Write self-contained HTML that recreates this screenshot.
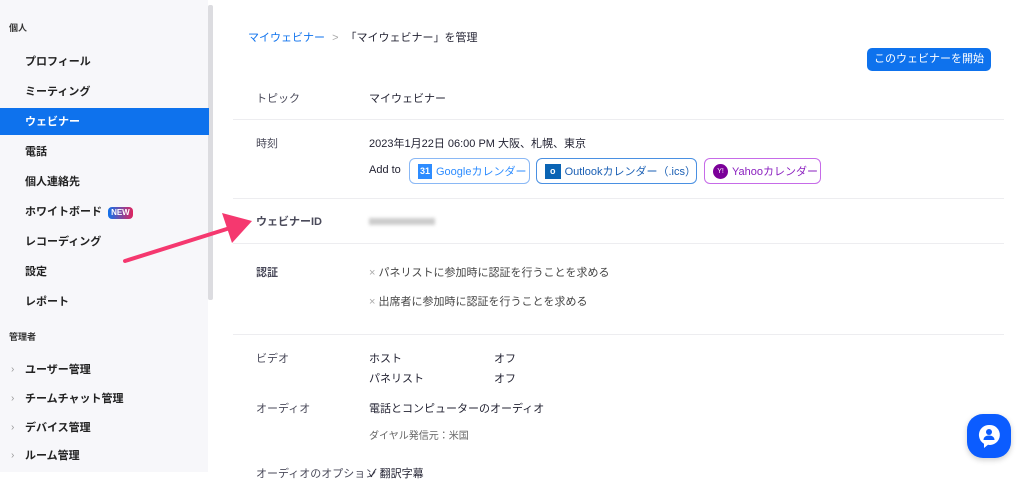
<!DOCTYPE html>
<html><head><meta charset="utf-8"><style>
*{margin:0;padding:0;box-sizing:border-box}
body{width:1024px;height:472px;overflow:hidden;background:#fff;font-family:"Liberation Sans","Noto Sans CJK JP",sans-serif;color:#232333;font-size:11px;position:relative}
.sb{position:absolute;left:0;top:0;width:208px;height:472px;background:#f7f7fa}
.scroll{position:absolute;left:208px;top:5px;width:5px;height:295px;background:#dcdce0;border-radius:2px}
.t{position:absolute;white-space:nowrap;line-height:14px}
.sh{font-size:9px;font-weight:bold;color:#333;left:9px}
.si{left:25px;font-weight:bold;font-size:11px;color:#222}
.act{position:absolute;left:0;top:108px;width:209px;height:27px;background:#0e72ed}
.chev{left:11px;color:#999;font-size:10px}
.line{position:absolute;left:233px;width:771px;height:1px;background:#ededf0}
.lab{left:256px;color:#4a4a5a}
.val{left:369px;color:#232333}
.btn{position:absolute;height:26px;border:1px solid;border-radius:6px;display:flex;align-items:center;padding-left:8px;font-size:11px;white-space:nowrap}
</style></head><body>
<div class="sb"></div>
<div class="scroll"></div>
<div class="act"></div>
<div class="t sh" style="top:21px">個人</div>
<div class="t si" style="top:55px">プロフィール</div>
<div class="t si" style="top:85px">ミーティング</div>
<div class="t si" style="top:115px;color:#fff">ウェビナー</div>
<div class="t si" style="top:145px">電話</div>
<div class="t si" style="top:175px">個人連絡先</div>
<div class="t si" style="top:205px">ホワイトボード <span style="display:inline-block;background:linear-gradient(90deg,#0e72ed,#e0245e);color:#fff;font-size:8px;border-radius:4px;padding:0 3px;line-height:12px;margin-left:3px">NEW</span></div>
<div class="t si" style="top:235px">レコーディング</div>
<div class="t si" style="top:265px">設定</div>
<div class="t si" style="top:295px">レポート</div>
<div class="t sh" style="top:330px">管理者</div>
<div class="t chev" style="top:363px">›</div><div class="t si" style="top:363px">ユーザー管理</div>
<div class="t chev" style="top:392px">›</div><div class="t si" style="top:392px">チームチャット管理</div>
<div class="t chev" style="top:421px">›</div><div class="t si" style="top:421px">デバイス管理</div>
<div class="t chev" style="top:449px">›</div><div class="t si" style="top:449px">ルーム管理</div>

<div class="t" style="left:248px;top:31px"><span style="color:#0e72ed">マイウェビナー</span> <span style="color:#aaa;margin:0 4px">&gt;</span> 「マイウェビナー」を管理</div>
<div style="position:absolute;left:867px;top:48px;width:124px;height:23px;background:#0e72ed;border-radius:5px;color:#fff;font-size:11px;text-align:center;line-height:23px">このウェビナーを開始</div>

<div class="t lab" style="top:92px">トピック</div><div class="t val" style="top:92px">マイウェビナー</div>
<div class="line" style="top:119px"></div>
<div class="t lab" style="top:137px">時刻</div><div class="t val" style="top:137px">2023年1月22日 06:00 PM 大阪、札幌、東京</div>
<div class="t val" style="top:163px">Add to</div>
<div class="btn" style="left:409px;top:158px;width:121px;border-color:#8ab8f5;color:#2d8cff"><span style="display:inline-block;width:14px;height:15px;background:#2d8cff;color:#fff;font-size:9px;font-weight:bold;text-align:center;line-height:15px;margin-right:4px">31</span>Googleカレンダー</div>
<div class="btn" style="left:536px;top:158px;width:161px;border-color:#4a90e2;color:#1a5fb4"><span style="display:inline-block;width:16px;height:15px;background:#0a64b4;color:#fff;font-size:9px;font-weight:bold;text-align:center;line-height:15px;margin-right:4px">o</span>Outlookカレンダー（.ics）</div>
<div class="btn" style="left:704px;top:158px;width:117px;border-color:#c66be8;color:#8a1fbf"><span style="display:inline-block;width:15px;height:15px;border-radius:50%;background:#7b0099;color:#fff;font-size:7px;text-align:center;line-height:15px;margin-right:4px">Y!</span>Yahooカレンダー</div>
<div class="line" style="top:198px"></div>
<div class="t lab" style="top:215px;font-weight:bold">ウェビナーID</div>
<div style="position:absolute;left:369px;top:218px;width:66px;height:7px;background:#ccc;filter:blur(1.5px)"></div>
<div class="line" style="top:243px"></div>
<div class="t lab" style="top:266px;font-weight:bold">認証</div>
<div class="t val" style="top:266px;color:#444"><span style="color:#aaa">×</span> パネリストに参加時に認証を行うことを求める</div>
<div class="t val" style="top:295px;color:#444"><span style="color:#aaa">×</span> 出席者に参加時に認証を行うことを求める</div>
<div class="line" style="top:334px"></div>
<div class="t lab" style="top:352px">ビデオ</div><div class="t val" style="top:352px">ホスト</div><div class="t" style="left:494px;top:352px">オフ</div>
<div class="t val" style="top:372px">パネリスト</div><div class="t" style="left:494px;top:372px">オフ</div>
<div class="t lab" style="top:402px">オーディオ</div><div class="t val" style="top:402px">電話とコンピューターのオーディオ</div>
<div class="t val" style="top:430px;color:#666;font-size:10px">ダイヤル発信元：米国</div>
<div class="t lab" style="top:467px">オーディオのオプション</div><div class="t val" style="top:467px">✓ 翻訳字幕</div>

<svg style="position:absolute;left:0;top:0" width="1024" height="472">
<line x1="125" y1="261" x2="230" y2="228" stroke="#f5386f" stroke-width="4" stroke-linecap="round"/>
<polygon points="252,221 222,213 232,243" fill="#f5386f"/>
</svg>
<div style="position:absolute;left:967px;top:414px;width:44px;height:44px;background:#0b5cff;border-radius:16px;box-shadow:0 2px 6px rgba(0,0,0,.2)">
<svg width="44" height="44"><path d="M22 11a10 10 0 0 0-5 18.7V34l4-3.2A10 10 0 1 0 22 11z" fill="#fff"/><circle cx="22" cy="18" r="3" fill="#0b5cff"/><path d="M16.5 26c0-3 2.5-4.5 5.5-4.5s5.5 1.5 5.5 4.5z" fill="#0b5cff"/></svg></div>
</body></html>
